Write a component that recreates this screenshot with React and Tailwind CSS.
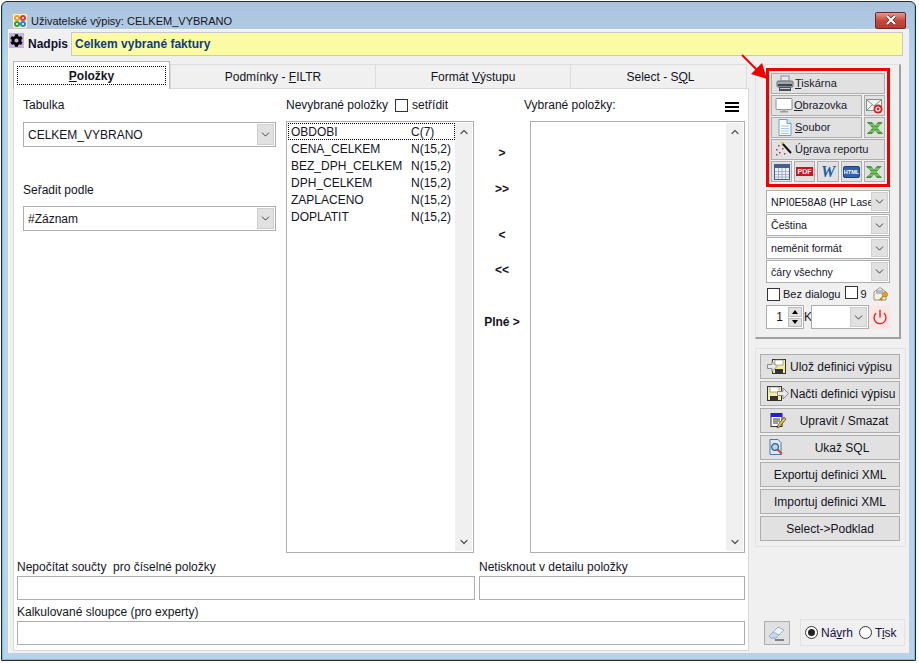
import React from 'react';
import { FaCog } from 'react-icons/fa';
import { ChevronDown, ChevronUp, Power } from 'lucide-react';

const ITEMS = [
  ['OBDOBI', 'C(7)'],
  ['CENA_CELKEM', 'N(15,2)'],
  ['BEZ_DPH_CELKEM', 'N(15,2)'],
  ['DPH_CELKEM', 'N(15,2)'],
  ['ZAPLACENO', 'N(15,2)'],
  ['DOPLATIT', 'N(15,2)'],
];

// Icons
const AppIcon = () => (
  <svg width="16" height="16" viewBox="0 0 16 16" className="shrink-0">
    <rect x="0.5" y="0.5" width="15" height="15" rx="2" fill="#f4efd8" stroke="#c8c8b0" />
    <circle cx="5" cy="5" r="3" fill="#e8a020" /><circle cx="5" cy="5" r="1" fill="#fff" />
    <circle cx="11" cy="5" r="3" fill="#d83a3a" /><circle cx="11" cy="5" r="1" fill="#fff" />
    <circle cx="5" cy="11" r="3" fill="#2f9e3f" /><circle cx="5" cy="11" r="1" fill="#fff" />
    <circle cx="11" cy="11" r="3" fill="#2f7fd0" /><circle cx="11" cy="11" r="1" fill="#fff" />
  </svg>
);

const CloseIcon = () => (
  <svg width="12" height="10" viewBox="0 0 12 10">
    <path d="M2 1 L10 9 M10 1 L2 9" stroke="#5a2020" strokeWidth="3.4" />
    <path d="M2 1 L10 9 M10 1 L2 9" stroke="#fff" strokeWidth="2.2" />
  </svg>
);

const PrinterIcon = () => (
  <svg width="18" height="17" viewBox="0 0 18 17">
    <rect x="5" y="1" width="8" height="5" fill="#e8e8ee" stroke="#8a8f98" />
    <rect x="1" y="6" width="16" height="6" rx="1" fill="#a0a6ae" stroke="#6c727a" />
    <rect x="2" y="9" width="14" height="2" fill="#3f454c" />
    <rect x="3" y="12" width="12" height="4" fill="#4a5058" />
    <rect x="4" y="13" width="10" height="1" fill="#c8ccd2" />
  </svg>
);

const MonitorIcon = () => (
  <svg width="18" height="15" viewBox="0 0 18 15">
    <rect x="1" y="0.5" width="16" height="11" rx="1" fill="#fff" stroke="#8a8a8a" />
    <rect x="7" y="11.5" width="4" height="1.5" fill="#b8b8b8" />
    <rect x="5" y="13" width="8" height="1.5" fill="#9a9a9a" />
  </svg>
);

const MailIcon = () => (
  <svg width="17" height="16" viewBox="0 0 17 16">
    <rect x="0.5" y="1.5" width="15" height="11" fill="#eef4ee" stroke="#7f9488" />
    <path d="M1 2 L8 8 L15 2 M1 12 L6 7 M15 12 L10 7" fill="none" stroke="#7f9488" />
    <circle cx="12" cy="11" r="4.5" fill="#d81e24" />
    <circle cx="12" cy="11" r="2" fill="none" stroke="#fff" strokeWidth="1.2" />
  </svg>
);

const DocIcon = () => (
  <svg width="14" height="17" viewBox="0 0 14 17">
    <path d="M1 0.5 H9 L13 4.5 V16.5 H1 Z" fill="#fbfdff" stroke="#6f9fd0" />
    <path d="M9 0.5 V4.5 H13" fill="#d6e6f6" stroke="#6f9fd0" />
    <path d="M3 7 H11 M3 9.5 H11 M3 12 H11 M3 14.5 H11" stroke="#a9c8e8" />
  </svg>
);

const ExcelIcon = () => (
  <svg width="16" height="12" viewBox="0 0 16 12">
    <path d="M0.5 0.5 H5 L8 4 L11 0.5 H15 L10 6 L15.5 11.5 H11 L8 8 L5 11.5 H0.5 L6 6 Z" fill="#4aa53f" stroke="#1f6a20" strokeWidth="0.6" />
    <path d="M2 3 H14 M2 6 H14 M2 9 H14" stroke="#b8e4a0" strokeWidth="0.8" />
  </svg>
);

const WandIcon = () => (
  <svg width="17" height="16" viewBox="0 0 17 16">
    <path d="M7 2 L16 12" stroke="#111" strokeWidth="2" />
    <path d="M6 1 L8 3" stroke="#e8d040" strokeWidth="2" />
    <g fill="#a04050">
      <rect x="3" y="4" width="1.5" height="1.5" /><rect x="7" y="7" width="1.5" height="1.5" />
      <rect x="1" y="8" width="1.5" height="1.5" /><rect x="4" y="11" width="1.5" height="1.5" />
      <rect x="9" y="12" width="1.5" height="1.5" /><rect x="1" y="13" width="1.5" height="1.5" />
    </g>
  </svg>
);

const TableIcon = () => (
  <svg width="16" height="16" viewBox="0 0 16 16">
    <rect x="0.5" y="0.5" width="15" height="15" fill="#eef1f6" stroke="#44608c" />
    <rect x="1" y="1" width="14" height="3" fill="#44608c" />
    <path d="M1 7.5 H15 M1 10.5 H15 M1 13 H15 M4.5 4 V15 M8 4 V15 M11.5 4 V15" stroke="#a8b4c4" />
  </svg>
);

const PdfIcon = () => (
  <svg width="17" height="9" viewBox="0 0 17 9">
    <rect width="17" height="9" fill="#c8161c" />
    <text x="8.5" y="7.2" textAnchor="middle" fontSize="7" fontWeight="700" fill="#fff" fontFamily="'Liberation Sans', sans-serif">PDF</text>
  </svg>
);

const WordIcon = () => (
  <span className="text-[16px] leading-none font-bold italic text-[#1c5ea8] font-['Liberation_Serif',serif]">W</span>
);

const HtmlIcon = () => (
  <svg width="17" height="12" viewBox="0 0 17 12">
    <rect x="0.5" y="0.5" width="16" height="11" rx="1.5" fill="#2f62ac" stroke="#1b3f78" />
    <text x="8.5" y="8.4" textAnchor="middle" fontSize="5.6" fontWeight="700" fill="#fff" fontFamily="'Liberation Sans', sans-serif">HTML</text>
  </svg>
);

const KeyMailIcon = () => (
  <svg width="16" height="16" viewBox="0 0 16 16">
    <path d="M1 6 L7 1.5 L13 6 V14 H1 Z" fill="#f6f2e2" stroke="#98907a" />
    <path d="M3 5 H10 M3 7 H10" stroke="#5f8ac0" />
    <circle cx="12" cy="8.5" r="2.6" fill="#e8a020" stroke="#a86c10" strokeWidth="0.6" />
    <path d="M10.5 10 L6.5 14 M8 13 L9.4 14.4" stroke="#c88418" strokeWidth="1.6" />
  </svg>
);

const SaveIcon = () => (
  <svg width="19" height="15" viewBox="0 0 19 15">
    <rect x="5.5" y="0.5" width="13" height="14" fill="#f4eca0" stroke="#333" />
    <rect x="8" y="1" width="8" height="5" fill="#fff" stroke="#777" strokeWidth="0.6" />
    <rect x="8" y="10" width="8" height="4.5" fill="#333" />
    <path d="M0.5 5.5 H5 V2.5 L10 7.5 L5 12.5 V9.5 H0.5 Z" fill="#e8e8e8" stroke="#8a8a8a" />
  </svg>
);

const LoadIcon = () => (
  <svg width="22" height="15" viewBox="0 0 22 15">
    <rect x="0.5" y="0.5" width="14" height="14" fill="#f4eca0" stroke="#333" />
    <rect x="3" y="1" width="9" height="5" fill="#fff" stroke="#777" strokeWidth="0.6" />
    <rect x="3" y="10" width="8" height="4.5" fill="#333" />
    <path d="M10.5 5.5 H16 V2 L21.5 7.5 L16 13 V9.5 H10.5 Z" fill="#e8e8e8" stroke="#8a8a8a" />
  </svg>
);

const EditIcon = () => (
  <svg width="17" height="16" viewBox="0 0 17 16">
    <rect x="1" y="0.5" width="11" height="13" fill="#fff" stroke="#333" />
    <rect x="1" y="0.5" width="11" height="3.5" fill="#2222c8" />
    <path d="M3 6 H10 M3 8 H10 M3 10 H8" stroke="#333" />
    <path d="M14 4 L8 12 L7 15 L10 13.5 L16 6 Z" fill="#e8c040" stroke="#333" strokeWidth="0.7" />
  </svg>
);

const SqlIcon = () => (
  <svg width="15" height="17" viewBox="0 0 15 17">
    <path d="M1 0.5 H9 L12 3.5 V15.5 H1 Z" fill="#dce8f4" stroke="#4a78a8" />
    <circle cx="6" cy="8" r="3.4" fill="#b8d0e8" stroke="#3a5a80" strokeWidth="1.2" />
    <path d="M8.5 10.5 L13 15" stroke="#c05030" strokeWidth="2" />
  </svg>
);

const EraserIcon = () => (
  <svg width="18" height="16" viewBox="0 0 18 16">
    <path d="M1 11 L10 2 L16 5 L8 13 H3 Z" fill="#eef2f8" stroke="#9ab0c8" />
    <path d="M1 11 L5 7 L11 10 L8 13 H3 Z" fill="#c8d8ea" stroke="#9ab0c8" />
    <path d="M7 15 H16" stroke="#222" />
  </svg>
);

// Controls
const Combo = ({ value, className }) => (
  <div className={`flex items-stretch bg-white border border-[#adadad] pl-1 overflow-hidden ${className}`}>
    <span className="flex-1 self-center whitespace-nowrap overflow-hidden">{value}</span>
    <span className="w-[17px] my-px mr-px bg-[#e1e1e1] border border-[#cfcfcf] flex items-center justify-center shrink-0">
      <ChevronDown size={13} strokeWidth={1.7} className="text-[#333]" />
    </span>
  </div>
);

const Btn = ({ className, children }) => (
  <div className={`bg-[#e1e1e1] border border-[#adadad] flex items-center ${className}`}>{children}</div>
);

const CheckBox = () => <span className="w-[13px] h-[13px] bg-white border border-[#333] inline-block shrink-0" />;

const ListBox = ({ className, children }) => (
  <div className={`h-[432px] bg-white border border-[#adadad] flex ${className}`}>
    <div className="flex-1 min-w-0 pt-[1px] pl-px">{children}</div>
    <div className="w-[17px] my-px mr-px bg-[#f0f0f0] flex flex-col justify-between items-center py-[3px] shrink-0">
      <ChevronUp size={12} strokeWidth={2.4} className="text-[#555]" />
      <ChevronDown size={12} strokeWidth={2.4} className="text-[#555]" />
    </div>
  </div>
);

const Tab = ({ className, children }) => (
  <div className={`h-[24px] bg-[#f0f0f0] border-t border-l border-[#dcdcdc] flex items-center justify-center ${className}`}>
    <span>{children}</span>
  </div>
);

export default function App() {
  return (
    <div className="w-[919px] h-[663px] bg-white pt-px pl-px text-[12px] leading-[14px] text-[#14141e] font-['Liberation_Sans',Arial,sans-serif]">
      <div className="relative w-[915px] h-[660px] rounded-t-[6px] border border-[#2a2a2a] bg-gradient-to-b from-[#a9c3de] to-[#b9d1ea] to-[8%] shadow-[inset_1px_0_0_#6cc4dc,inset_-1px_0_0_#6cc4dc,inset_0_-1px_0_#6cc4dc] flex flex-col px-[6px] pb-[7px]">
        {/* Title bar */}
        <div className="h-[27px] shrink-0 flex items-center pl-[4px] gap-[3px] relative">
          <div className="mt-[10px] flex items-center gap-[3px] text-[11px]">
            <AppIcon />
            <span>Uživatelské výpisy: CELKEM_VYBRANO</span>
          </div>
          <div className="ml-auto mr-[3px] mt-[9px] w-[31px] h-[17px] rounded-[2px] border border-[#6a2a2a] bg-gradient-to-b from-[#e09a90] via-[#c8483c] to-[#b83a30] flex items-center justify-center">
            <CloseIcon />
          </div>
        </div>

        {/* Client area */}
        <div className="flex-1 min-h-0 bg-[#f0f0f0] border-l border-t border-[#fafafa] flex flex-col">
          {/* Nadpis */}
          <div className="h-[32px] shrink-0 flex items-center pr-[6px] pb-[4px]">
            <span className="w-[15px] h-[15px] bg-[#c8b0dc] flex items-center justify-center shrink-0 mb-[7px]">
              <FaCog size={13} className="text-black" />
            </span>
            <span className="font-bold ml-[4px] text-[#101030]">Nadpis</span>
            <div className="flex-1 ml-[3px] h-[24px] bg-[#fbfba6] border border-[#c8c8c8] flex items-center pl-[3px] font-bold text-[#0f3d78]">
              Celkem vybrané faktury
            </div>
          </div>

          {/* Main */}
          <div className="flex-1 min-h-0 flex pl-[4px] pr-[3px] pb-[2px]">
            {/* Tab control */}
            <div className="w-[736px] shrink-0 flex flex-col pt-[2px] relative">
              <div className="flex h-[24px] shrink-0">
                <div className="w-[157px] h-[28px] -mt-[3px] bg-white border-t border-l border-r border-[#b8b8b8] relative z-10 flex items-center justify-center font-bold">
                  <div className="w-[149px] h-[19px] border border-dotted border-black flex items-center justify-center">
                    <span><u>P</u>oložky</span>
                  </div>
                </div>
                <Tab className="w-[205px]">Podmínky - <u>F</u>ILTR</Tab>
                <Tab className="w-[195px]">Formát <u>V</u>ýstupu</Tab>
                <Tab className="w-[177px] border-r pl-[4px]">Select - S<u>Q</u>L</Tab>
              </div>

              <div className="flex-1 min-h-0 bg-white border border-[#d8d8d8] px-[3px] flex flex-col">
                <div className="flex pt-[8px] items-start">
                  {/* Tabulka */}
                  <div className="w-[269px] shrink-0 pl-[6px] flex flex-col">
                    <div className="h-[25px] pt-px">Tabulka</div>
                    <Combo value="CELKEM_VYBRANO" className="w-[253px] h-[25px]" />
                    <div className="mt-[36px] h-[23px]">Seřadit podle</div>
                    <Combo value="#Záznam" className="w-[253px] h-[25px]" />
                  </div>

                  {/* Nevybrané */}
                  <div className="w-[188px] shrink-0">
                    <div className="h-[24px] pt-px flex items-start gap-[7px]">
                      <span>Nevybrané položky</span>
                      <span className="flex items-center gap-[4px]"><CheckBox /> setřídit</span>
                    </div>
                    <ListBox className="w-[188px]">
                      {ITEMS.map(([name, type], i) => (
                        <div
                          key={name}
                          className={`h-[17px] flex items-center pl-[2px] ${i === 0 ? 'border border-dotted border-black' : 'border border-transparent'}`}
                        >
                          <span className="w-[120px] shrink-0">{name}</span>
                          <span>{type}</span>
                        </div>
                      ))}
                    </ListBox>
                  </div>

                  {/* Arrow buttons */}
                  <div className="w-[56px] shrink-0 flex flex-col items-center font-bold pt-[49px]">
                    <span className="h-[14px]">&gt;</span>
                    <span className="h-[14px] mt-[22px]">&gt;&gt;</span>
                    <span className="h-[14px] mt-[32px]">&lt;</span>
                    <span className="h-[14px] mt-[21px]">&lt;&lt;</span>
                    <span className="h-[14px] mt-[38px]">Plné &gt;</span>
                  </div>

                  {/* Vybrané */}
                  <div className="w-[215px] shrink-0">
                    <div className="h-[24px] pt-px flex items-start justify-between pr-[6px]">
                      <span className="-ml-[6px]">Vybrané položky:</span>
                      <svg width="14" height="10" viewBox="0 0 14 10" className="mt-[4px]">
                        <path d="M0 1 H14 M0 5 H14 M0 9 H14" stroke="#000" strokeWidth="2" />
                      </svg>
                    </div>
                    <ListBox className="w-[215px]" />
                  </div>
                </div>

                {/* Bottom fields */}
                <div className="grid grid-cols-[458px_266px] gap-x-[4px] mt-[7px]">
                  <div className="h-[16px]">Nepočítat součty&nbsp; pro číselné položky</div>
                  <div className="h-[16px]">Netisknout v detailu položky</div>
                  <div className="h-[24px] bg-white border border-[#adadad]" />
                  <div className="h-[24px] bg-white border border-[#adadad]" />
                  <div className="h-[21px] col-span-2 flex items-end pb-[2px]">Kalkulované sloupce (pro experty)</div>
                  <div className="h-[24px] col-span-2 bg-white border border-[#adadad]" />
                </div>
              </div>
            </div>

            {/* Right column */}
            <div className="flex-1 min-w-0 pl-[6px] pt-[2px] flex flex-col">
              <div className="w-[146px] h-[275px] shrink-0 border-t border-l border-[#e2e2e2] border-r-2 border-b-2 border-r-[#a0a0a0] border-b-[#a0a0a0] pl-[10px] pt-[3px]">
                {/* Output buttons */}
                <div className="w-[124px] h-[119px] border-[3px] border-[#f00000] p-[2px] flex flex-col gap-[1px] text-[11px] text-[#202030]">
                  <Btn className="h-[21px] pl-[4px] pb-px gap-[1px]"><PrinterIcon /><span><u>T</u>iskárna</span></Btn>
                  <div className="flex gap-[2px]">
                    <Btn className="w-[91px] h-[21px] pl-[3px] pb-px gap-[1px]"><MonitorIcon /><span><u>O</u>brazovka</span></Btn>
                    <Btn className="flex-1 h-[21px] justify-center"><MailIcon /></Btn>
                  </div>
                  <div className="flex gap-[2px]">
                    <Btn className="w-[91px] h-[21px] pl-[6px] pb-px gap-[3px]"><DocIcon /><span><u>S</u>oubor</span></Btn>
                    <Btn className="flex-1 h-[21px] justify-center"><ExcelIcon /></Btn>
                  </div>
                  <Btn className="h-[21px] pl-[3px] pb-px gap-[3px]"><WandIcon /><span>Ú<u>p</u>rava reportu</span></Btn>
                  <div className="flex gap-[2px]">
                    <Btn className="flex-1 h-[21px] justify-center"><TableIcon /></Btn>
                    <Btn className="flex-1 h-[21px] justify-center"><PdfIcon /></Btn>
                    <Btn className="flex-1 h-[21px] justify-center"><WordIcon /></Btn>
                    <Btn className="flex-1 h-[21px] justify-center"><HtmlIcon /></Btn>
                    <Btn className="flex-1 h-[21px] justify-center"><ExcelIcon /></Btn>
                  </div>
                </div>

                {/* Settings */}
                <div className="w-[124px] mt-[3px] flex flex-col gap-[1px] text-[10.6px]">
                  <Combo value="NPI0E58A8 (HP Lase" className="h-[23px]" />
                  <Combo value="Čeština" className="h-[22px]" />
                  <Combo value="neměnit formát" className="h-[22px]" />
                  <Combo value="čáry všechny" className="h-[23px]" />
                </div>
                <div className="w-[124px] h-[22px] flex items-center pl-px text-[11px]">
                  <CheckBox />
                  <span className="ml-[3px] whitespace-nowrap">Bez dialogu</span>
                  <span className="ml-[4px]"><CheckBox /></span>
                  <span className="ml-[3px]">9</span>
                  <span className="ml-auto mr-px"><KeyMailIcon /></span>
                </div>
                <div className="w-[124px] h-[24px] flex items-stretch">
                  <div className="w-[38px] bg-white border border-[#adadad] flex items-center justify-end shrink-0">
                    <span className="mr-[4px]">1</span>
                    <div className="w-[16px] h-full flex flex-col gap-px p-px">
                      <span className="flex-1 bg-[#e1e1e1] border border-[#bbb] flex items-center justify-center">
                        <span className="w-0 h-0 border-x-[3px] border-x-transparent border-b-[4px] border-b-black" />
                      </span>
                      <span className="flex-1 bg-[#e1e1e1] border border-[#bbb] flex items-center justify-center">
                        <span className="w-0 h-0 border-x-[3px] border-x-transparent border-t-[4px] border-t-black" />
                      </span>
                    </div>
                  </div>
                  <span className="w-[7px] self-center shrink-0">K</span>
                  <Combo value="" className="w-[58px]" />
                  <span className="flex-1 bg-[#fde6e6] flex items-center justify-center">
                    <Power size={16} strokeWidth={2} className="text-[#e81818]" />
                  </span>
                </div>
              </div>

              {/* Definition buttons */}
              <div className="w-[151px] mt-[9px] border border-[#e2e2e2] pl-[4px] pt-[5px] pb-[5px] flex flex-col gap-[2px] shrink-0">
                <Btn className="w-[140px] h-[25px] pl-[6px] gap-[4px]"><SaveIcon /><span className="whitespace-nowrap">Ulož definici výpisu</span></Btn>
                <Btn className="w-[140px] h-[25px] pl-[6px] gap-px"><LoadIcon /><span className="whitespace-nowrap">Načti definici výpisu</span></Btn>
                <Btn className="w-[140px] h-[25px] pl-[9px]"><EditIcon /><span className="flex-1 text-center pl-[2px]">Upravit / Smazat</span></Btn>
                <Btn className="w-[140px] h-[25px] pl-[8px]"><SqlIcon /><span className="flex-1 text-center pl-[1px]">Ukaž SQL</span></Btn>
                <Btn className="w-[140px] h-[25px] justify-center">Exportuj definici XML</Btn>
                <Btn className="w-[140px] h-[25px] justify-center">Importuj definici XML</Btn>
                <Btn className="w-[140px] h-[25px] justify-center">Select-&gt;Podklad</Btn>
              </div>

              {/* Mode */}
              <div className="mt-auto mb-[5px] flex items-center pl-[9px]">
                <Btn className="w-[26px] h-[24px] justify-center"><EraserIcon /></Btn>
                <div className="ml-[10px] w-[105px] h-[27px] border border-[#e2e2e2] flex items-center pl-[4px] text-[#14143c]">
                  <span className="w-[13px] h-[13px] rounded-full border border-[#333] bg-white flex items-center justify-center shrink-0">
                    <span className="w-[7px] h-[7px] rounded-full bg-[#222]" />
                  </span>
                  <span className="ml-[3px]">Ná<u>v</u>rh</span>
                  <span className="ml-[6px] w-[13px] h-[13px] rounded-full border border-[#333] bg-white shrink-0" />
                  <span className="ml-[3px]">T<u>i</u>sk</span>
                </div>
              </div>
            </div>
          </div>
        </div>

        {/* Red arrow pointing at the output buttons */}
        <svg width="30" height="30" viewBox="0 0 30 30" className="absolute left-[738px] top-[51px] z-20">
          <path d="M2 2 L20 20" stroke="#f00000" strokeWidth="2" />
          <path d="M27 26 L11 21 L22 10 Z" fill="#f00000" />
        </svg>
      </div>
    </div>
  );
}
